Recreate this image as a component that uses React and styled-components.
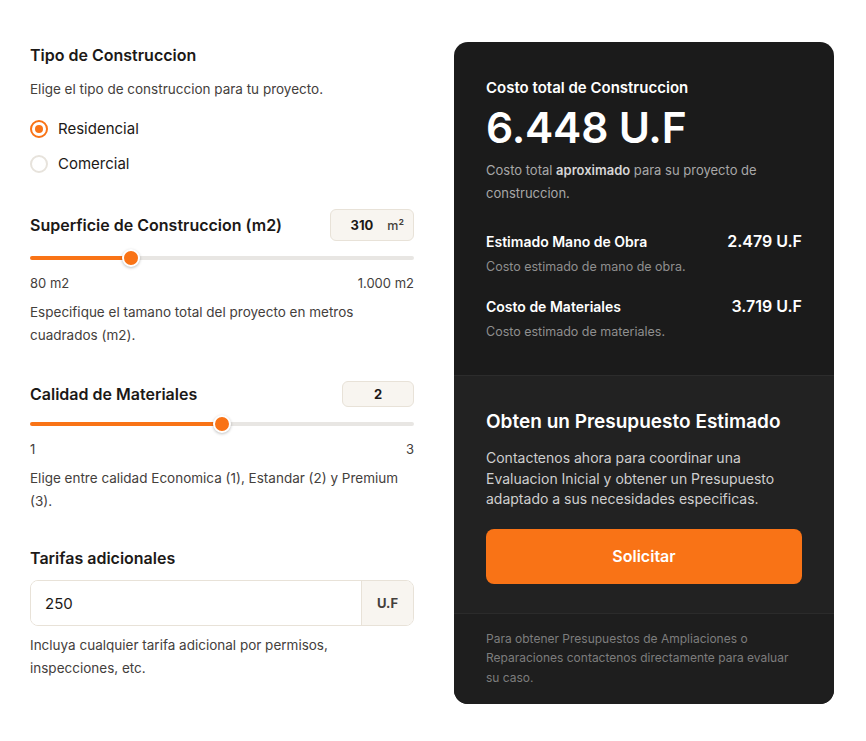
import React, { useState } from 'react';
import styled, { createGlobalStyle } from 'styled-components';

const ORANGE = '#f97316';

const GlobalStyle = createGlobalStyle`
  html, body {
    margin: 0;
    padding: 0;
    background: #ffffff;
    font-family: Inter, "Noto Sans", sans-serif;
    color: #1c1917;
  }
  * { box-sizing: border-box; }
`;

const Page = styled.div`
  display: grid;
  grid-template-columns: 384px 380px;
  column-gap: 40px;
  padding: 42px 32px 39px 30px;
  align-items: start;
`;

const Form = styled.div`
  display: flex;
  flex-direction: column;
  padding-top: 2px;
`;

const Section = styled.section`
  display: flex;
  flex-direction: column;
  margin-bottom: ${p => p.$gap || 0}px;
`;

const HeadRow = styled.div`
  display: flex;
  align-items: center;
  justify-content: space-between;
`;

const Title = styled.h3`
  margin: 0;
  font-size: 16px;
  font-weight: 600;
  line-height: 22px;
  color: #1c1917;
`;

const Help = styled.p`
  margin: ${p => p.$top || 0}px 0 0;
  font-size: 13.5px;
  line-height: 23px;
  color: #44403c;
`;

const RadioList = styled.div`
  display: flex;
  flex-direction: column;
  gap: 13px;
  margin-top: 17px;
`;

const RadioItem = styled.label`
  display: flex;
  align-items: center;
  gap: 10px;
  font-size: 15px;
  line-height: 22px;
  color: #1c1917;
  cursor: pointer;
`;

const RadioDot = styled.span`
  width: 18px;
  height: 18px;
  border-radius: 50%;
  border: 2px solid ${p => (p.$on ? ORANGE : '#e7e3dc')};
  display: flex;
  align-items: center;
  justify-content: center;
  &::after {
    content: '';
    width: 8px;
    height: 8px;
    border-radius: 50%;
    background: ${p => (p.$on ? ORANGE : 'transparent')};
  }
`;

const ValueBox = styled.div`
  width: ${p => p.$w}px;
  height: ${p => p.$h}px;
  border: 1px solid #e8e2d8;
  background: #f8f5f0;
  border-radius: 6px;
  display: flex;
  align-items: center;
  justify-content: ${p => (p.$unit ? 'flex-end' : 'center')};
  gap: 14px;
  padding: 0 ${p => (p.$unit ? 9 : 0)}px 0 0;
  font-size: 13px;
  font-weight: 700;
  color: #1c1917;
`;

const Unit = styled.span`
  font-weight: 500;
  color: #44403c;
  font-size: 12.5px;
`;

const Range = styled.input`
  -webkit-appearance: none;
  appearance: none;
  width: 100%;
  height: 4px;
  border-radius: 4px;
  margin: ${p => p.$top}px 0 0;
  outline: none;
  &::-webkit-slider-thumb {
    -webkit-appearance: none;
    appearance: none;
    width: 18px;
    height: 18px;
    border-radius: 50%;
    background: ${ORANGE};
    border: 2px solid #ffffff;
    box-shadow: 0 1px 3px rgba(0, 0, 0, 0.25);
    cursor: pointer;
  }
`;

const Bounds = styled.div`
  display: flex;
  justify-content: space-between;
  margin-top: 13px;
  font-size: 13px;
  line-height: 20px;
  color: #44403c;
`;

const InputGroup = styled.div`
  display: flex;
  margin-top: 11px;
  height: 46px;
  border: 1px solid #e8e2d8;
  border-radius: 8px;
  overflow: hidden;
`;

const TextInput = styled.input`
  flex: 1;
  border: none;
  outline: none;
  padding: 0 14px;
  font-family: inherit;
  font-size: 15px;
  color: #1c1917;
  background: #ffffff;
`;

const Addon = styled.span`
  width: 52px;
  display: flex;
  align-items: center;
  justify-content: center;
  background: #f8f5f0;
  border-left: 1px solid #e8e2d8;
  font-size: 13px;
  font-weight: 700;
  color: #44403c;
`;

const Panel = styled.aside`
  border-radius: 14px;
  overflow: hidden;
  background: #1b1b1b;
  color: #ffffff;
`;

const PanelTop = styled.div`
  padding: 35px 32px 34px;
  border-bottom: 1px solid #2c2c2c;
`;

const PanelLabel = styled.div`
  font-size: 15px;
  font-weight: 600;
  line-height: 22px;
`;

const BigTotal = styled.div`
  font-size: 42.5px;
  font-weight: 600;
  line-height: 52px;
  margin-top: 3px;
  letter-spacing: -0.2px;
`;

const PanelText = styled.p`
  margin: 5px 0 0;
  font-size: 13px;
  line-height: 23px;
  color: #a8a8a8;
  b { color: #d6d6d6; font-weight: 600; }
`;

const Line = styled.div`
  margin-top: ${p => p.$top}px;
`;

const LineHead = styled.div`
  display: flex;
  justify-content: space-between;
  align-items: baseline;
`;

const LineName = styled.span`
  font-size: 14px;
  font-weight: 600;
  line-height: 20px;
`;

const LineValue = styled.span`
  font-size: 16px;
  font-weight: 600;
`;

const LineSub = styled.div`
  margin-top: 6px;
  font-size: 12.5px;
  line-height: 18px;
  color: #8f8f8f;
`;

const PanelMid = styled.div`
  background: #222222;
  padding: 33px 32px 29px;
  border-bottom: 1px solid #2b2b2b;
`;

const CtaTitle = styled.h2`
  margin: 0;
  font-size: 19px;
  font-weight: 600;
  line-height: 26px;
`;

const CtaText = styled.p`
  margin: 13px 0 0;
  font-size: 14px;
  line-height: 20.5px;
  color: #cfcfcf;
`;

const Button = styled.button`
  width: 100%;
  height: 55px;
  margin-top: 19px;
  border: none;
  border-radius: 8px;
  background: ${ORANGE};
  color: #ffffff;
  font-family: inherit;
  font-size: 16px;
  font-weight: 600;
  cursor: pointer;
`;

const PanelFoot = styled.div`
  background: #1e1e1e;
  padding: 15px 32px 17px;
  font-size: 12px;
  line-height: 19.5px;
  color: #7d7d7d;
`;

const fill = (v, min, max) => {
  const pct = ((v - min) / (max - min)) * 100;
  return `linear-gradient(to right, ${ORANGE} 0%, ${ORANGE} ${pct}%, #e8e6e3 ${pct}%, #e8e6e3 100%)`;
};

export default function App() {
  const [tipo, setTipo] = useState('res');
  const [area, setArea] = useState(310);
  const [calidad, setCalidad] = useState(2);
  const [extra, setExtra] = useState('250');

  return (
    <>
      <GlobalStyle />
      <Page>
        <Form>
          <Section $gap={34}>
            <Title>Tipo de Construccion</Title>
            <Help $top={12}>Elige el tipo de construccion para tu proyecto.</Help>
            <RadioList>
              <RadioItem onClick={() => setTipo('res')}>
                <RadioDot $on={tipo === 'res'} />
                Residencial
              </RadioItem>
              <RadioItem onClick={() => setTipo('com')}>
                <RadioDot $on={tipo === 'com'} />
                Comercial
              </RadioItem>
            </RadioList>
          </Section>

          <Section $gap={34}>
            <HeadRow>
              <Title>Superficie de Construccion (m2)</Title>
              <ValueBox $w={84} $h={32} $unit>
                {area}
                <Unit>m²</Unit>
              </ValueBox>
            </HeadRow>
            <Range
              type="range"
              min={80}
              max={1000}
              value={area}
              $top={15}
              onChange={e => setArea(Number(e.target.value))}
              style={{ background: fill(area, 80, 1000) }}
            />
            <Bounds>
              <span>80 m2</span>
              <span>1.000 m2</span>
            </Bounds>
            <Help $top={8}>Especifique el tamano total del proyecto en metros cuadrados (m2).</Help>
          </Section>

          <Section $gap={34}>
            <HeadRow>
              <Title>Calidad de Materiales</Title>
              <ValueBox $w={72} $h={26}>{calidad}</ValueBox>
            </HeadRow>
            <Range
              type="range"
              min={1}
              max={3}
              value={calidad}
              $top={15}
              onChange={e => setCalidad(Number(e.target.value))}
              style={{ background: fill(calidad, 1, 3) }}
            />
            <Bounds>
              <span>1</span>
              <span>3</span>
            </Bounds>
            <Help $top={8}>Elige entre calidad Economica (1), Estandar (2) y Premium (3).</Help>
          </Section>

          <Section>
            <Title>Tarifas adicionales</Title>
            <InputGroup>
              <TextInput value={extra} onChange={e => setExtra(e.target.value)} />
              <Addon>U.F</Addon>
            </InputGroup>
            <Help $top={8}>Incluya cualquier tarifa adicional por permisos, inspecciones, etc.</Help>
          </Section>
        </Form>

        <Panel>
          <PanelTop>
            <PanelLabel>Costo total de Construccion</PanelLabel>
            <BigTotal>6.448 U.F</BigTotal>
            <PanelText>
              Costo total <b>aproximado</b> para su proyecto de construccion.
            </PanelText>
            <Line $top={26}>
              <LineHead>
                <LineName>Estimado Mano de Obra</LineName>
                <LineValue>2.479 U.F</LineValue>
              </LineHead>
              <LineSub>Costo estimado de mano de obra.</LineSub>
            </Line>
            <Line $top={20}>
              <LineHead>
                <LineName>Costo de Materiales</LineName>
                <LineValue>3.719 U.F</LineValue>
              </LineHead>
              <LineSub>Costo estimado de materiales.</LineSub>
            </Line>
          </PanelTop>
          <PanelMid>
            <CtaTitle>Obten un Presupuesto Estimado</CtaTitle>
            <CtaText>
              Contactenos ahora para coordinar una Evaluacion Inicial y obtener un Presupuesto adaptado a sus necesidades especificas.
            </CtaText>
            <Button>Solicitar</Button>
          </PanelMid>
          <PanelFoot>
            Para obtener Presupuestos de Ampliaciones o Reparaciones contactenos directamente para evaluar su caso.
          </PanelFoot>
        </Panel>
      </Page>
    </>
  );
}
